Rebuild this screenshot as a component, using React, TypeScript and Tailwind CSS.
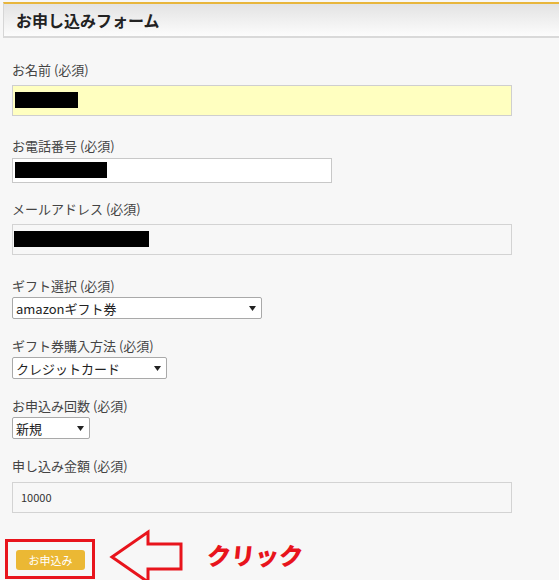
import { ReactNode } from 'react'

const JP = { fontFamily: '"Noto Sans CJK JP", "Liberation Sans", sans-serif' }

function Label({ children, className = '' }: { children: ReactNode; className?: string }) {
  return <div className={`text-[13px] leading-[18px] text-[#444] ${className}`}>{children}</div>
}

function Caret() {
  return (
    <svg width="7" height="5" viewBox="0 0 7 5" className="shrink-0">
      <polygon points="0,0 7,0 3.5,5" fill="#222" />
    </svg>
  )
}

function FakeSelect({ value, width, caretPad }: { value: string; width: string; caretPad: string }) {
  return (
    <div
      className={`${width} h-[22px] mt-[2px] flex items-center justify-between bg-white border border-[#a9a9a9] rounded-[2px] pl-[3px] ${caretPad} text-[13px] text-[#222]`}
    >
      <span className="leading-none">{value}</span>
      <Caret />
    </div>
  )
}

export default function App() {
  return (
    <div className="w-[559px] min-h-[580px] bg-[#f7f7f7] pt-[2px]" style={JP}>
      {/* Header */}
      <div className="ml-[3px] border-t-2 border-t-[#e8b63c] border-l border-l-[#d6d6d6] border-b-2 border-b-[#d9d9d9] bg-gradient-to-b from-[#e3e3e3] to-[#fcfcfc] h-[36px] flex items-center pl-[12px]">
        <h1 className="text-[16px] font-bold text-[#222] leading-none">お申し込みフォーム</h1>
      </div>

      <div className="px-[12px]">
        {/* Name */}
        <Label className="mt-[23px]">お名前 (必須)</Label>
        <div className="mt-[6px] w-[500px] h-[31px] bg-[#ffffc0] border border-[#cfcfcf] pt-[6px] pl-[2px]">
          <div className="w-[63px] h-[16px] bg-black" />
        </div>

        {/* Phone */}
        <Label className="mt-[21px]">お電話番号 (必須)</Label>
        <div className="mt-[3px] w-[320px] h-[25px] bg-white border border-[#c8c8c8] pt-[3px] pl-[2px]">
          <div className="w-[92px] h-[16px] bg-black" />
        </div>

        {/* Email */}
        <Label className="mt-[17px]">メールアドレス (必須)</Label>
        <div className="mt-[6px] w-[500px] h-[31px] bg-[#f7f7f7] border border-[#d3d3d3] pt-[6px] pl-[1px]">
          <div className="w-[135px] h-[16px] bg-black" />
        </div>

        {/* Gift select */}
        <Label className="mt-[22px]">ギフト選択 (必須)</Label>
        <FakeSelect value="amazonギフト券" width="w-[250px]" caretPad="pr-[5px]" />

        <Label className="mt-[18px]">ギフト券購入方法 (必須)</Label>
        <FakeSelect value="クレジットカード" width="w-[155px]" caretPad="pr-[5px]" />

        <Label className="mt-[18px]">お申込み回数 (必須)</Label>
        <FakeSelect value="新規" width="w-[78px]" caretPad="pr-[5px]" />

        {/* Amount */}
        <Label className="mt-[18px]">申し込み金額 (必須)</Label>
        <div className="mt-[7px] w-[500px] h-[31px] bg-[#f7f7f7] border border-[#d3d3d3] flex items-center pl-[8px] text-[11px] text-[#333]">
          10000
        </div>
      </div>

      {/* Submit row */}
      <div className="mt-[17px] flex items-start">
        <div className="ml-[5px] mt-[9px] w-[90px] h-[40px] border-[3px] border-[#e8141c] pl-[8px] pt-[8px]">
          <button className="w-[69px] h-[20px] rounded-[3px] bg-[#ebb834] text-white text-[11px] leading-none flex items-center justify-center">
            お申込み
          </button>
        </div>
        <svg width="76" height="50" viewBox="0 0 76 50" className="ml-[14px] overflow-visible">
          <polygon
            points="3,27 39,2 39,14 72,14 72,39 39,39 39,52"
            fill="none"
            stroke="#e8141c"
            strokeWidth="3"
            strokeLinejoin="miter"
          />
        </svg>
        <div className="ml-[22px] mt-[12px] text-[24px] leading-[26px] font-black text-[#e8141c] -skew-x-6">
          クリック
        </div>
      </div>
    </div>
  )
}
